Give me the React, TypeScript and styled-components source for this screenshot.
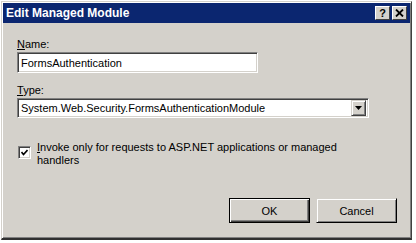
import React from 'react';
import styled, { createGlobalStyle } from 'styled-components';

const GlobalStyle = createGlobalStyle`
  html, body {
    margin: 0;
    padding: 0;
    background: #ffffff;
  }
  body {
    font-family: "Liberation Sans", Arial, sans-serif;
    font-size: 11px;
    color: #000;
  }
`;

const Page = styled.div`
  padding: 1px 0 0 1px;
`;

const Window = styled.div`
  width: 411px;
  height: 239px;
  box-sizing: border-box;
  background: #d4d1cb;
  border-top: 1px solid #d4d1cb;
  border-left: 1px solid #d4d1cb;
  border-right: 1px solid #404040;
  border-bottom: 2px solid #303030;
  box-shadow: inset 1px 1px 0 #ffffff, inset -1px -1px 0 #808080;
  padding: 1px;
  display: flex;
  flex-direction: column;
`;

const TitleBar = styled.div`
  height: 20px;
  background: #0b2670;
  display: flex;
  align-items: center;
  padding: 0 3px 0 3px;
  gap: 2px;
`;

const Title = styled.div`
  flex: 1;
  color: #fff;
  font-weight: bold;
  font-size: 12px;
`;

const TitleButton = styled.div`
  width: 15px;
  height: 14px;
  box-sizing: border-box;
  background: #d4d1cb;
  border-top: 1px solid #fff;
  border-left: 1px solid #fff;
  border-right: 1px solid #404040;
  border-bottom: 1px solid #404040;
  display: flex;
  align-items: center;
  justify-content: center;
  font-weight: bold;
  font-size: 11px;
  line-height: 1;
`;

const Body = styled.div`
  flex: 1;
  display: flex;
  flex-direction: column;
  padding: 15px 13px 14px 14px;
`;

// first letter is the access key, shown underlined
const Label = styled.div<{ $gap?: number }>`
  line-height: 13px;
  margin-top: ${p => p.$gap ?? 0}px;
  margin-bottom: 1px;
  &::first-letter {
    text-decoration: underline;
  }
`;

const TextBox = styled.div<{ $width: number; $height: number }>`
  width: ${p => p.$width}px;
  height: ${p => p.$height}px;
  box-sizing: border-box;
  background: #fff;
  border-top: 1px solid #808080;
  border-left: 1px solid #808080;
  border-right: 1px solid #ffffff;
  border-bottom: 1px solid #ffffff;
  box-shadow: inset 1px 1px 0 #404040, inset -1px -1px 0 #d4d1cb;
  display: flex;
  align-items: center;
  padding: 0 2px 0 3px;
`;

const ComboText = styled.div`
  flex: 1;
`;

const DropButton = styled.div`
  width: 15px;
  height: 16px;
  box-sizing: border-box;
  background: #d4d1cb;
  border-top: 1px solid #d4d1cb;
  border-left: 1px solid #d4d1cb;
  border-right: 1px solid #404040;
  border-bottom: 1px solid #404040;
  box-shadow: inset 1px 1px 0 #fff, inset -1px -1px 0 #808080;
  display: flex;
  align-items: center;
  justify-content: center;
`;

const CheckRow = styled.div`
  display: flex;
  align-items: flex-start;
  gap: 6px;
  margin-top: 23px;
  margin-left: 1px;
`;

const CheckBox = styled.div`
  width: 13px;
  height: 13px;
  margin-top: 5px;
  flex-shrink: 0;
  box-sizing: border-box;
  background: #fff;
  border-top: 1px solid #808080;
  border-left: 1px solid #808080;
  border-right: 1px solid #fff;
  border-bottom: 1px solid #fff;
  box-shadow: inset 1px 1px 0 #404040, inset -1px -1px 0 #d4d1cb;
  display: flex;
  align-items: center;
  justify-content: center;
`;

const CheckText = styled.div`
  line-height: 13px;
  width: 305px;
  &::first-letter {
    text-decoration: underline;
  }
`;

const ButtonRow = styled.div`
  margin-top: auto;
  display: flex;
  justify-content: flex-end;
  gap: 6px;
`;

const Button = styled.div<{ $default?: boolean }>`
  width: 81px;
  height: 25px;
  box-sizing: border-box;
  background: #d4d1cb;
  display: flex;
  align-items: center;
  justify-content: center;
  border: 1px solid ${p => (p.$default ? '#000' : '#d4d1cb')};
  border-right-color: #000;
  border-bottom-color: #000;
  box-shadow: ${p =>
    p.$default
      ? 'inset 1px 1px 0 #fff, inset -1px -1px 0 #404040, inset -2px -2px 0 #808080'
      : 'inset 1px 1px 0 #fff, inset -1px -1px 0 #808080'};
`;

export default function App() {
  return (
    <Page>
      <GlobalStyle />
      <Window>
        <TitleBar>
          <Title>Edit Managed Module</Title>
          <TitleButton>?</TitleButton>
          <TitleButton>
            <svg width="9" height="8" viewBox="0 0 9 8">
              <path d="M1 0.5 L8 7.5 M8 0.5 L1 7.5" stroke="#000" strokeWidth="1.8" />
            </svg>
          </TitleButton>
        </TitleBar>
        <Body>
          <Label>Name:</Label>
          <TextBox $width={241} $height={21}>FormsAuthentication</TextBox>
          <Label $gap={11}>Type:</Label>
          <TextBox $width={352} $height={20}>
            <ComboText>System.Web.Security.FormsAuthenticationModule</ComboText>
            <DropButton>
              <svg width="7" height="4" viewBox="0 0 7 4">
                <path d="M0 0 H7 L3.5 4 Z" fill="#000" />
              </svg>
            </DropButton>
          </TextBox>
          <CheckRow>
            <CheckBox>
              <svg width="7" height="7" viewBox="0 0 7 7">
                <path d="M0.5 3 L2.5 5.5 L6.5 1" stroke="#000" strokeWidth="1.6" fill="none" />
              </svg>
            </CheckBox>
            <CheckText>Invoke only for requests to ASP.NET applications or managed handlers</CheckText>
          </CheckRow>
          <ButtonRow>
            <Button $default>OK</Button>
            <Button>Cancel</Button>
          </ButtonRow>
        </Body>
      </Window>
    </Page>
  );
}
